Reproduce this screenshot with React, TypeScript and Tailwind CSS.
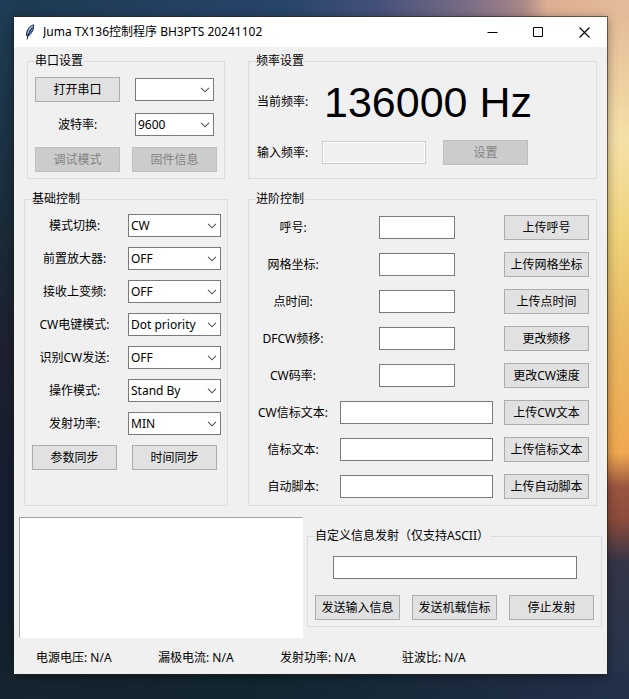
import type { ReactNode } from "react";

const box = "h-[23px] border border-[#7a7a7a] bg-white px-[2px] text-xs text-black outline-none";

function Push({ children, disabled = false }: { children: ReactNode; disabled?: boolean }) {
  return (
    <button
      type="button"
      disabled={disabled}
      className="h-[25px] w-[85px] shrink-0 border border-[#adadad] bg-[#e1e1e1] text-center whitespace-nowrap disabled:border-[#bfbfbf] disabled:bg-[#cccccc] disabled:text-[#838383]"
    >
      {children}
    </button>
  );
}

function Group({ title, className, children }: { title: string; className: string; children: ReactNode }) {
  return (
    <fieldset className={`border border-[#dcdcdc] ${className}`}>
      <legend className="pr-px leading-4">{title}</legend>
      {children}
    </fieldset>
  );
}

function Combo({ id, value, label, className }: { id: string; value: string; label?: string; className: string }) {
  return (
    <div className={`relative ${className}`}>
      <select id={id} aria-label={label} defaultValue={value} className={`${box} block w-full appearance-none rounded-none pr-5`}>
        <option value={value}>{value}</option>
      </select>
      <svg
        className="pointer-events-none absolute top-[9px] right-1 h-[6px] w-[10px]"
        viewBox="0 0 10 6"
        fill="none"
        stroke="#555"
        strokeWidth="1.1"
      >
        <path d="M1 0.8 5 4.8 9 0.8" />
      </svg>
    </div>
  );
}

const basics = [
  { id: "mode", label: "模式切换:", value: "CW" },
  { id: "preamp", label: "前置放大器:", value: "OFF" },
  { id: "upconv", label: "接收上变频:", value: "OFF" },
  { id: "key", label: "CW电键模式:", value: "Dot priority" },
  { id: "cwid", label: "识别CW发送:", value: "OFF" },
  { id: "operate", label: "操作模式:", value: "Stand By" },
  { id: "power", label: "发射功率:", value: "MIN" },
];

const advanced = [
  { id: "call", label: "呼号:", action: "上传呼号", wide: false },
  { id: "grid", label: "网格坐标:", action: "上传网格坐标", wide: false },
  { id: "dot", label: "点时间:", action: "上传点时间", wide: false },
  { id: "dfcw", label: "DFCW频移:", action: "更改频移", wide: false },
  { id: "speed", label: "CW码率:", action: "更改CW速度", wide: false },
  { id: "cwtext", label: "CW信标文本:", action: "上传CW文本", wide: true },
  { id: "beacon", label: "信标文本:", action: "上传信标文本", wide: true },
  { id: "script", label: "自动脚本:", action: "上传自动脚本", wide: true },
];

const readings = ["电源电压: N/A", "漏极电流: N/A", "发射功率: N/A", "驻波比: N/A"];

function TitleBar() {
  return (
    <header className="flex h-[30px] items-center bg-white pl-[10px]">
      <svg className="h-4 w-3 shrink-0" viewBox="0 0 12 16">
        <path d="M9.6 0.7C6.6 1.4 3.4 4.6 2.7 8.4L2.4 11.6 4 12.2C6.8 10.4 9 7.2 9.4 4.2Z" fill="#4f7cbf" stroke="#1b2740" strokeWidth="0.9" />
        <path d="M8.6 2C6.2 4 4.6 6.8 4 9.6" stroke="#c4d8f2" strokeWidth="1.2" fill="none" />
        <path d="M8.2 3.4C6 6 4.2 9.6 3.1 15.4" stroke="#10131c" strokeWidth="0.9" fill="none" />
      </svg>
      <h1 className="ml-[7px] flex-1 truncate">Juma TX136控制程序 BH3PTS 20241102</h1>
      <button type="button" aria-label="Minimize" className="grid h-full w-[46px] place-items-center">
        <svg className="size-[11px]" viewBox="0 0 11 11" fill="none" stroke="#000">
          <path d="M0.5 5.5H10.5" />
        </svg>
      </button>
      <button type="button" aria-label="Maximize" className="grid h-full w-[46px] place-items-center">
        <svg className="size-[11px]" viewBox="0 0 11 11" fill="none" stroke="#000">
          <path d="M0.5 0.5H9.5V9.5H0.5Z" />
        </svg>
      </button>
      <button type="button" aria-label="Close" className="grid h-full w-[46px] place-items-center">
        <svg className="size-[11px]" viewBox="0 0 11 11" fill="none" stroke="#000" strokeWidth="1.1">
          <path d="M0.5 0.5 10.5 10.5M10.5 0.5 0.5 10.5" />
        </svg>
      </button>
    </header>
  );
}

export default function App() {
  return (
    <div className="min-h-screen bg-[linear-gradient(to_right,#1b3a50,#243f5f_25%,#27446a_45%,#44507a_60%,#7d6f86_75%,#a88688_83%,#dcae92_87%,#e6bd9a)] font-['Noto_Sans','Noto_Sans_CJK_SC',sans-serif] text-xs leading-4 text-black">
      <div className="min-h-screen bg-[linear-gradient(to_right,#16242f,#122530_40%,#22304a),linear-gradient(to_bottom,#1e3d56,#1a2a36_35%,#1e2030_50%,#141f30_75%,#122530),linear-gradient(to_bottom,#e4bb98,#f5e0a8_18%,#efd27a_32%,#eab964_46%,#f0a850_64%,#9a5540_69%,#8a4a3c_74%,#343547_80%,#22344c)] bg-[size:100%_26px,15px_100%,23px_calc(100%_-_16px)] bg-[position:bottom,left,right_bottom] bg-no-repeat pt-[17px] pr-[22px] pb-[25px] pl-[14px]">
        <main className="bg-[#f0f0f0] shadow-[0_0_0_1px_rgba(40,35,25,0.6),0_2px_10px_rgba(0,0,0,0.45)]">
          <TitleBar />

          <div className="flex flex-col gap-3 px-[10px] pt-[6px]">
            <div className="flex gap-5">
              <div className="w-[204px] shrink-0 px-[3px]">
                <Group title="串口设置" className="px-[7px] pb-[6px]">
                  <div className="grid auto-rows-[25px] grid-cols-[85px_85px] items-center justify-items-center gap-x-3 gap-y-[10px] pt-2">
                    <Push>打开串口</Push>
                    <Combo id="port" value="" label="串口" className="w-[79px]" />
                    <label htmlFor="baud">波特率:</label>
                    <Combo id="baud" value="9600" className="w-[79px]" />
                    <Push disabled>调试模式</Push>
                    <Push disabled>固件信息</Push>
                  </div>
                </Group>
              </div>
              <Group title="频率设置" className="min-w-0 flex-1 px-[7px]">
                <div className="flex items-center pt-2 pl-px">
                  <span className="w-[67px] shrink-0">当前频率:</span>
                  <output className="font-['Liberation_Sans',Arial,sans-serif] text-[43px] leading-[50px] whitespace-nowrap">136000 Hz</output>
                </div>
                <div className="flex items-center pt-[13px] pl-px">
                  <label htmlFor="freq" className="w-[65px] shrink-0">输入频率:</label>
                  <input
                    id="freq"
                    type="text"
                    disabled
                    className="mr-[17px] h-[23px] w-[104px] min-w-0 border border-[#cccccc] bg-[#f0f0f0] px-[3px] shadow-[inset_0_0_0_1px_#fff]"
                  />
                  <Push disabled>设置</Push>
                </div>
              </Group>
            </div>

            <div className="flex gap-5">
              <Group title="基础控制" className="w-[204px] shrink-0 pr-[6px] pl-[7px]">
                <div className="grid grid-cols-[85px_93px] items-center gap-x-[11px] gap-y-[10px] pt-[7px]">
                  {basics.map((row) => (
                    <div key={row.id} className="contents">
                      <label htmlFor={row.id} className="justify-self-center">{row.label}</label>
                      <Combo id={row.id} value={row.value} className="w-full" />
                    </div>
                  ))}
                  <Push>参数同步</Push>
                  <div className="text-center">
                    <Push>时间同步</Push>
                  </div>
                </div>
              </Group>
              <Group title="进阶控制" className="min-w-0 flex-1 px-[7px] pb-[6px]">
                <div className="grid grid-cols-[72px_minmax(0,1fr)_85px] items-center justify-items-center gap-x-[11px] gap-y-3 pt-2 pl-px">
                  {advanced.map((row) => (
                    <div key={row.id} className="contents">
                      <label htmlFor={row.id} className="whitespace-nowrap">{row.label}</label>
                      <input id={row.id} type="text" className={`${box} ${row.wide ? "w-full" : "w-[76px]"}`} />
                      <Push>{row.action}</Push>
                    </div>
                  ))}
                </div>
              </Group>
            </div>
          </div>

          <div className="flex items-center gap-1 px-[5px] pt-[11px]">
            <textarea
              aria-label="Log"
              className="h-[121px] min-w-0 flex-1 resize-none border border-t-[#a0a0a0] border-r-white border-b-white border-l-[#a0a0a0] bg-white p-1 outline-none"
            />
            <Group title="自定义信息发射（仅支持ASCII）" className="shrink-0 px-[7px] pb-[6px]">
              <div className="flex flex-col items-center gap-4 pt-3">
                <input type="text" aria-label="自定义信息" className={`${box} w-[244px]`} />
                <div className="flex gap-3">
                  <Push>发送输入信息</Push>
                  <Push>发送机载信标</Push>
                  <Push>停止发射</Push>
                </div>
              </div>
            </Group>
          </div>

          <footer className="flex pt-3 pb-2 pl-[22px]">
            {readings.map((text) => (
              <span key={text} className="w-[122px]">{text}</span>
            ))}
          </footer>
        </main>
      </div>
    </div>
  );
}
